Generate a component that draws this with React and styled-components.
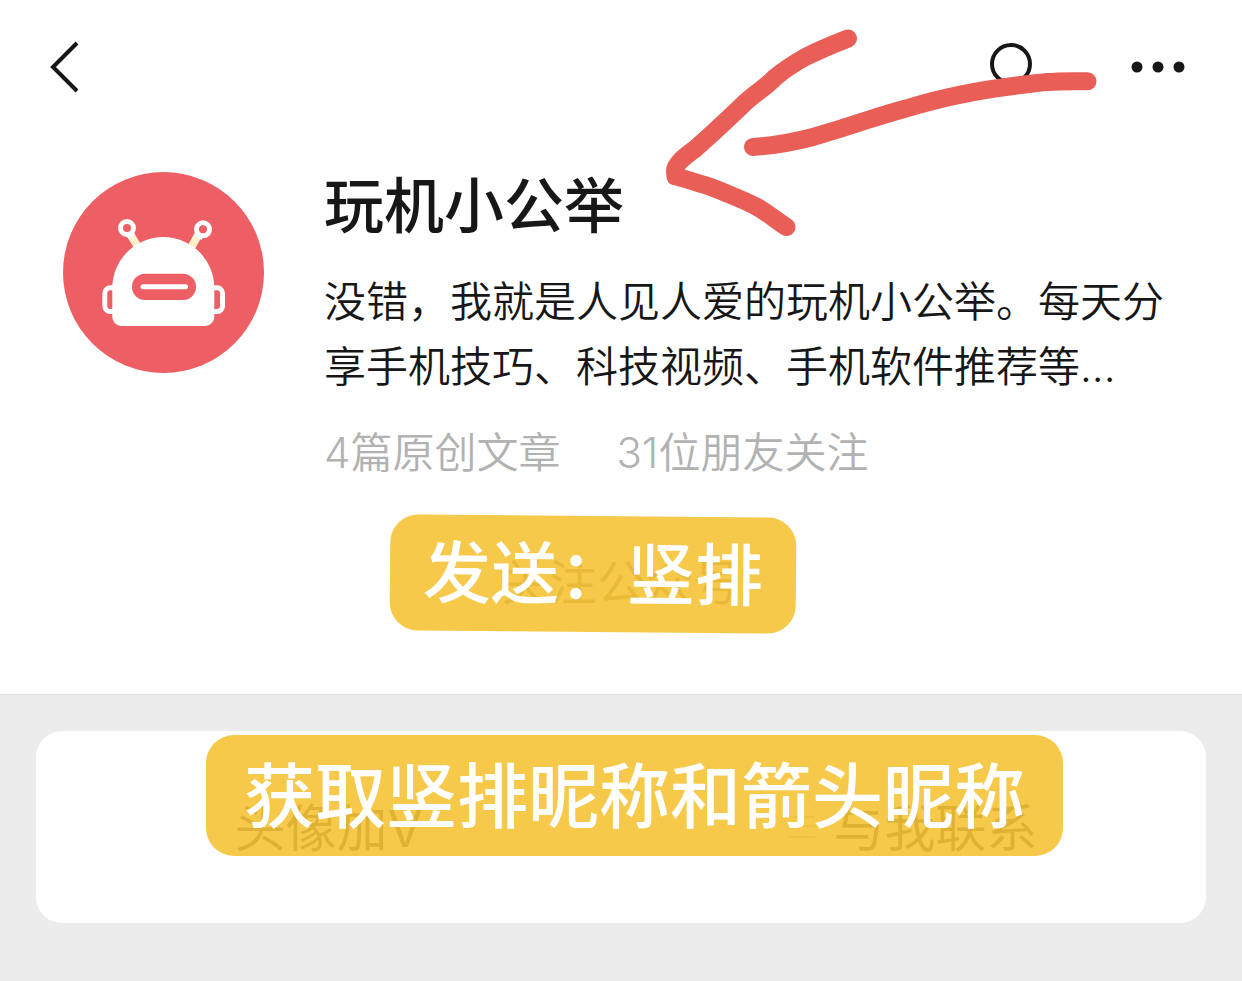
import styled, { createGlobalStyle } from "styled-components";

export default function App() {
  return (
    <Page>
      <GlobalStyle />
      <TopBar>
        <IconButton aria-label="返回">
          <svg width="30" height="54" viewBox="0 0 30 54" fill="none">
            <path d="M28 3L4 27l24 24" stroke="#171717" strokeWidth="4" />
          </svg>
        </IconButton>
        <TopActions>
          <IconButton aria-label="搜索">
            <svg width="48" height="54" viewBox="0 0 48 54" fill="none">
              <circle cx="24" cy="24" r="19" stroke="#171717" strokeWidth="4" />
            </svg>
          </IconButton>
          <IconButton aria-label="更多">
            <svg width="54" height="54" viewBox="0 0 54 54" fill="#171717">
              <circle cx="6" cy="27" r="5.5" />
              <circle cx="27" cy="27" r="5.5" />
              <circle cx="48" cy="27" r="5.5" />
            </svg>
          </IconButton>
        </TopActions>
      </TopBar>

      <Profile>
        <Robot />
        <Info>
          <Name>玩机小公举</Name>
          <Intro>
            没错，我就是人见人爱的玩机小公举。每天分享手机技巧、科技视频、手机软件推荐等...
          </Intro>
          <Stats>
            <span>4篇原创文章</span>
            <span>31位朋友关注</span>
          </Stats>
        </Info>
      </Profile>

      <FollowRow>
        <FollowButton>关注公众号</FollowButton>
        <SendSticker>发送：竖排</SendSticker>
      </FollowRow>

      <Bottom>
        <MenuCard>
          <MenuItem>头像加V</MenuItem>
          <MenuItem>
            <svg width="26" height="26" viewBox="0 0 26 26" stroke="#b5b5b5" strokeWidth="2">
              <path d="M0 5h26M0 14h26M0 25h26" />
            </svg>
            与我联系
          </MenuItem>
          <NicknameSticker>获取竖排昵称和箭头昵称</NicknameSticker>
        </MenuCard>
      </Bottom>

      <Arrow />
    </Page>
  );
}

function Robot() {
  return (
    <Avatar viewBox="0 0 201 201" fill="none">
      <circle cx="100.5" cy="100.5" r="100.5" fill="#ed5f64" />
      <path d="M67 62l8 13M135 63l-7 13" stroke="#fff0cb" strokeWidth="8" />
      <path d="M66 60l3 5M138 61l-3 5" stroke="#fff" strokeWidth="8" />
      <g fill="#ed5f64" stroke="#fff" strokeWidth="5">
        <circle cx="64" cy="56" r="6.5" />
        <circle cx="140" cy="57.3" r="6.5" />
        <rect x="41.8" y="115.8" width="20" height="23.7" rx="5.5" />
        <rect x="139.5" y="115.8" width="20" height="23.7" rx="5.5" />
      </g>
      <path
        d="M49.3 116a51 51 0 0 1 102 0v29a9 9 0 0 1-9 9h-84a9 9 0 0 1-9-9z"
        fill="#fff"
      />
      <rect x="69" y="101.7" width="64" height="26.3" rx="13.1" fill="#ed5f64" />
      <path d="M80 114.7h42.5" stroke="#fff" strokeWidth="5" strokeLinecap="round" />
    </Avatar>
  );
}

function Arrow() {
  return (
    <ArrowSvg viewBox="660 20 450 230" fill="none">
      <path d="M848 38.5C834 44 819 50 804.6 57.5C793 64 784 70 775 77.5C765 88 754 94 743.6 104C728 119 712 134 695.5 148.5C687 155 675 163 675 171L675.5 176.5C683 178 691 181 699 183.3C709 186 718 189.5 727 193.5C738 198 748 202 758 207.5C768 213.5 776 220 786.5 227" />
      <path d="M753 147C774 145.5 794 142 814 136.7C830 132 846 127 862 121.7C877 117 891 112.5 906 108.5C924 103 943 98 962 94.3C983 90 1004 87 1025 84.5C1035 83 1044 82 1054 81.7C1066 81 1077 81.2 1087.5 81.3" />
    </ArrowSvg>
  );
}

const GlobalStyle = createGlobalStyle`
  * {
    box-sizing: border-box;
  }
  body {
    margin: 0;
    background-color: #fff;
    color: #171717;
    font-family: Inter, "Noto Sans CJK SC", sans-serif;
  }
  button {
    border: 0;
    padding: 0;
    background: none;
    color: inherit;
    font-family: inherit;
    cursor: pointer;
  }
`;

const Page = styled.div`
  position: relative;
  display: flex;
  flex-direction: column;
  min-height: 100vh;
  overflow: hidden;
`;

const TopBar = styled.header`
  display: flex;
  align-items: center;
  justify-content: space-between;
  height: 134px;
  padding: 0 57px 0 49px;
`;

const TopActions = styled.div`
  display: flex;
  gap: 96px;
`;

const IconButton = styled.button`
  display: flex;
`;

const Profile = styled.section`
  display: flex;
  align-items: flex-start;
  gap: 60px;
  padding: 38px 72px 0 63px;
`;

const Avatar = styled.svg`
  flex: none;
  width: 201px;
  height: 201px;
`;

const Info = styled.div`
  flex: 1;
  min-width: 0;
`;

const Name = styled.h1`
  margin: 0;
  font-size: 60px;
  font-weight: 500;
  line-height: 68px;
`;

const Intro = styled.p`
  margin: 29px 0 0;
  font-size: 42px;
  font-weight: 350;
  line-height: 65px;
`;

const Stats = styled.div`
  display: flex;
  gap: 56px;
  margin-top: 24px;
  color: #b2b2b2;
  font-size: 42px;
  font-weight: 350;
  line-height: 60px;
`;

const FollowRow = styled.div`
  position: relative;
  display: flex;
  align-items: center;
  justify-content: center;
  height: 211px;
  padding-bottom: 12px;
`;

const FollowButton = styled.button`
  color: #75664a;
  font-size: 48px;
  line-height: 72px;
`;

/* label laid over a control, which stays faintly visible through it */
const Sticker = styled.div`
  position: absolute;
  display: flex;
  align-items: center;
  justify-content: center;
  padding-bottom: 10px;
  border-radius: 28px;
  background-color: rgba(245, 195, 54, 0.9);
  color: #fff;
  font-weight: 500;
  white-space: nowrap;
`;

const SendSticker = styled(Sticker)`
  top: 33px;
  left: calc(50% - 231px);
  width: 406px;
  height: 116px;
  font-size: 68px;
  transform: rotate(0.5deg);
`;

const Bottom = styled.main`
  flex: 1;
  padding: 36px;
  border-top: 1px solid #e0e0e0;
  background-color: #ececec;
`;

const MenuCard = styled.nav`
  position: relative;
  display: grid;
  grid-template-columns: 1fr 1fr;
  height: 192px;
  border-radius: 26px;
  background-color: #fff;
`;

const MenuItem = styled.button`
  display: flex;
  align-items: center;
  justify-content: center;
  gap: 18px;
  padding-bottom: 5px;
  font-size: 51px;
`;

const NicknameSticker = styled(Sticker)`
  top: 4px;
  left: calc(50% - 415px);
  width: 857px;
  height: 121px;
  font-size: 71px;
`;

const ArrowSvg = styled.svg`
  position: absolute;
  top: 20px;
  left: 660px;
  width: 450px;
  height: 230px;
  stroke: #e95e57;
  stroke-width: 18px;
  stroke-linecap: round;
  stroke-linejoin: round;
  pointer-events: none;
`;
